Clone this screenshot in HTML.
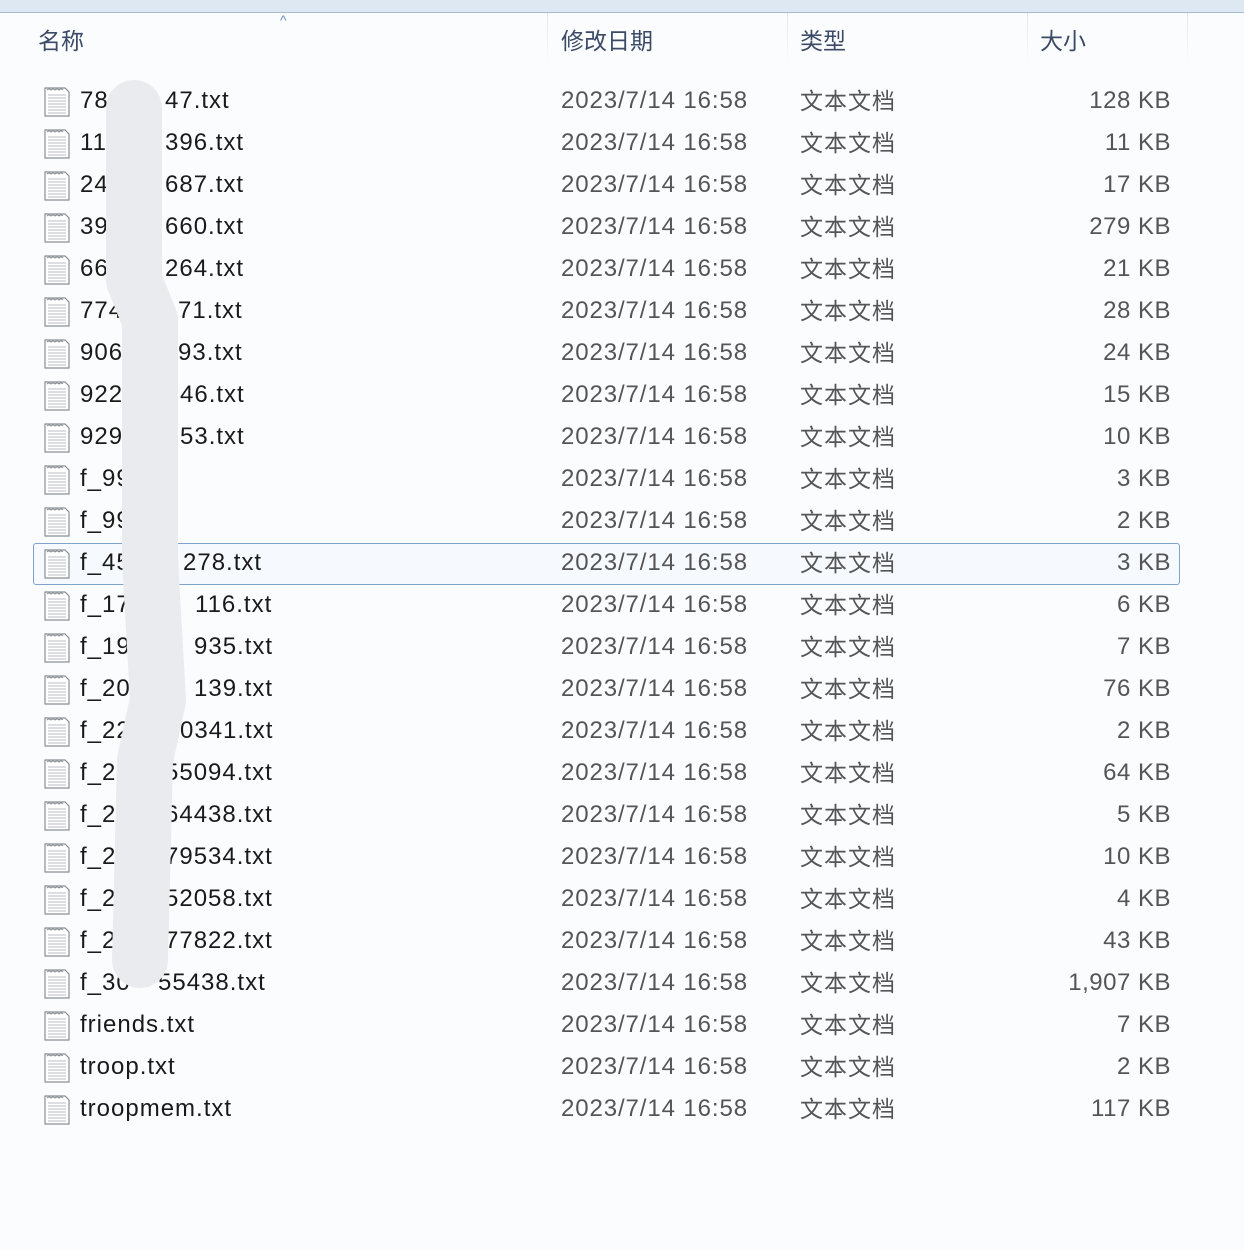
<!DOCTYPE html>
<html><head><meta charset="utf-8"><style>
html,body{margin:0;padding:0}
body{width:1244px;height:1250px;position:relative;background:#fbfcfe;overflow:hidden;font-family:"Liberation Sans","Noto Sans CJK SC",sans-serif}
.top{position:absolute;left:0;top:0;width:1244px;height:12px;background:#dde8f3;border-bottom:1px solid #a9bccf}
.hd{position:absolute;top:13px;height:58px;line-height:56px;font-size:23px;color:#3b4a66}
.div{position:absolute;top:13px;width:1px;height:50px;background:linear-gradient(#e3e6ea,#fbfcfe)}
.row{position:absolute;left:0;width:1244px;height:42px;line-height:42px;font-size:24px}
.ic{position:absolute;left:44px;top:7px}
.n{position:absolute;left:80px;color:#1a1a1a;letter-spacing:1px}
.r{position:absolute;color:#1a1a1a;letter-spacing:1px}
.d{position:absolute;left:561px;color:#555;letter-spacing:0.9px}
.t{position:absolute;left:800px;color:#555;font-size:23px;letter-spacing:1px}
.s{position:absolute;right:73px;color:#555;letter-spacing:0.5px}
.sel{position:absolute;left:33px;top:543px;width:1145px;height:40px;border:1px solid #7fa3cc;border-radius:3px;background:#f6f9fd}
</style></head><body>
<div class="top"></div>
<div class="hd" style="left:38px">名称</div>
<div style="position:absolute;left:280px;top:12px;font-size:14px;color:#6a8fb8">&#94;</div>
<div class="div" style="left:547px"></div>
<div class="hd" style="left:561px">修改日期</div>
<div class="div" style="left:787px"></div>
<div class="hd" style="left:800px">类型</div>
<div class="div" style="left:1027px"></div>
<div class="hd" style="left:1040px">大小</div>
<div class="div" style="left:1187px"></div>
<div class="sel"></div>
<svg width="0" height="0" style="position:absolute"><defs><symbol id="f" viewBox="0 0 26 30"><path d="M1 1H21L25 5V29H1Z" fill="#fff" stroke="#8a8f96" stroke-width="1.2"/><g stroke="#b8bec6" stroke-width="1"><path d="M4 8H22M4 11H22M4 14H22M4 17H22M4 20H22M4 23H22M4 26H22"/></g><path d="M3 3Q5 1 7 3Q9 1 11 3Q13 1 15 3Q17 1 19 3" fill="none" stroke="#8a8f96" stroke-width="1"/></symbol></defs></svg>
<div class="row" style="top:80px"><svg class="ic" width="26" height="30"><use href="#f"/></svg><span class="n">78</span><span class="r" style="left:165px">47.txt</span><span class="d">2023/7/14 16:58</span><span class="t">文本文档</span><span class="s">128 KB</span></div>
<div class="row" style="top:122px"><svg class="ic" width="26" height="30"><use href="#f"/></svg><span class="n">11</span><span class="r" style="left:165px">396.txt</span><span class="d">2023/7/14 16:58</span><span class="t">文本文档</span><span class="s">11 KB</span></div>
<div class="row" style="top:164px"><svg class="ic" width="26" height="30"><use href="#f"/></svg><span class="n">24</span><span class="r" style="left:165px">687.txt</span><span class="d">2023/7/14 16:58</span><span class="t">文本文档</span><span class="s">17 KB</span></div>
<div class="row" style="top:206px"><svg class="ic" width="26" height="30"><use href="#f"/></svg><span class="n">39</span><span class="r" style="left:165px">660.txt</span><span class="d">2023/7/14 16:58</span><span class="t">文本文档</span><span class="s">279 KB</span></div>
<div class="row" style="top:248px"><svg class="ic" width="26" height="30"><use href="#f"/></svg><span class="n">66</span><span class="r" style="left:165px">264.txt</span><span class="d">2023/7/14 16:58</span><span class="t">文本文档</span><span class="s">21 KB</span></div>
<div class="row" style="top:290px"><svg class="ic" width="26" height="30"><use href="#f"/></svg><span class="n">774</span><span class="r" style="left:178px">71.txt</span><span class="d">2023/7/14 16:58</span><span class="t">文本文档</span><span class="s">28 KB</span></div>
<div class="row" style="top:332px"><svg class="ic" width="26" height="30"><use href="#f"/></svg><span class="n">906</span><span class="r" style="left:178px">93.txt</span><span class="d">2023/7/14 16:58</span><span class="t">文本文档</span><span class="s">24 KB</span></div>
<div class="row" style="top:374px"><svg class="ic" width="26" height="30"><use href="#f"/></svg><span class="n">922</span><span class="r" style="left:180px">46.txt</span><span class="d">2023/7/14 16:58</span><span class="t">文本文档</span><span class="s">15 KB</span></div>
<div class="row" style="top:416px"><svg class="ic" width="26" height="30"><use href="#f"/></svg><span class="n">929</span><span class="r" style="left:180px">53.txt</span><span class="d">2023/7/14 16:58</span><span class="t">文本文档</span><span class="s">10 KB</span></div>
<div class="row" style="top:458px"><svg class="ic" width="26" height="30"><use href="#f"/></svg><span class="n">f_99</span><span class="d">2023/7/14 16:58</span><span class="t">文本文档</span><span class="s">3 KB</span></div>
<div class="row" style="top:500px"><svg class="ic" width="26" height="30"><use href="#f"/></svg><span class="n">f_99</span><span class="d">2023/7/14 16:58</span><span class="t">文本文档</span><span class="s">2 KB</span></div>
<div class="row" style="top:542px"><svg class="ic" width="26" height="30"><use href="#f"/></svg><span class="n">f_45</span><span class="r" style="left:183px">278.txt</span><span class="d">2023/7/14 16:58</span><span class="t">文本文档</span><span class="s">3 KB</span></div>
<div class="row" style="top:584px"><svg class="ic" width="26" height="30"><use href="#f"/></svg><span class="n">f_17</span><span class="r" style="left:195px">116.txt</span><span class="d">2023/7/14 16:58</span><span class="t">文本文档</span><span class="s">6 KB</span></div>
<div class="row" style="top:626px"><svg class="ic" width="26" height="30"><use href="#f"/></svg><span class="n">f_19</span><span class="r" style="left:194px">935.txt</span><span class="d">2023/7/14 16:58</span><span class="t">文本文档</span><span class="s">7 KB</span></div>
<div class="row" style="top:668px"><svg class="ic" width="26" height="30"><use href="#f"/></svg><span class="n">f_20</span><span class="r" style="left:194px">139.txt</span><span class="d">2023/7/14 16:58</span><span class="t">文本文档</span><span class="s">76 KB</span></div>
<div class="row" style="top:710px"><svg class="ic" width="26" height="30"><use href="#f"/></svg><span class="n">f_22</span><span class="r" style="left:180px">0341.txt</span><span class="d">2023/7/14 16:58</span><span class="t">文本文档</span><span class="s">2 KB</span></div>
<div class="row" style="top:752px"><svg class="ic" width="26" height="30"><use href="#f"/></svg><span class="n">f_2</span><span class="r" style="left:165px">55094.txt</span><span class="d">2023/7/14 16:58</span><span class="t">文本文档</span><span class="s">64 KB</span></div>
<div class="row" style="top:794px"><svg class="ic" width="26" height="30"><use href="#f"/></svg><span class="n">f_2</span><span class="r" style="left:165px">64438.txt</span><span class="d">2023/7/14 16:58</span><span class="t">文本文档</span><span class="s">5 KB</span></div>
<div class="row" style="top:836px"><svg class="ic" width="26" height="30"><use href="#f"/></svg><span class="n">f_2</span><span class="r" style="left:165px">79534.txt</span><span class="d">2023/7/14 16:58</span><span class="t">文本文档</span><span class="s">10 KB</span></div>
<div class="row" style="top:878px"><svg class="ic" width="26" height="30"><use href="#f"/></svg><span class="n">f_2</span><span class="r" style="left:165px">52058.txt</span><span class="d">2023/7/14 16:58</span><span class="t">文本文档</span><span class="s">4 KB</span></div>
<div class="row" style="top:920px"><svg class="ic" width="26" height="30"><use href="#f"/></svg><span class="n">f_2</span><span class="r" style="left:165px">77822.txt</span><span class="d">2023/7/14 16:58</span><span class="t">文本文档</span><span class="s">43 KB</span></div>
<div class="row" style="top:962px"><svg class="ic" width="26" height="30"><use href="#f"/></svg><span class="n">f_30</span><span class="r" style="left:158px">55438.txt</span><span class="d">2023/7/14 16:58</span><span class="t">文本文档</span><span class="s">1,907 KB</span></div>
<div class="row" style="top:1004px"><svg class="ic" width="26" height="30"><use href="#f"/></svg><span class="n">friends.txt</span><span class="d">2023/7/14 16:58</span><span class="t">文本文档</span><span class="s">7 KB</span></div>
<div class="row" style="top:1046px"><svg class="ic" width="26" height="30"><use href="#f"/></svg><span class="n">troop.txt</span><span class="d">2023/7/14 16:58</span><span class="t">文本文档</span><span class="s">2 KB</span></div>
<div class="row" style="top:1088px"><svg class="ic" width="26" height="30"><use href="#f"/></svg><span class="n">troopmem.txt</span><span class="d">2023/7/14 16:58</span><span class="t">文本文档</span><span class="s">117 KB</span></div>
<svg style="position:absolute;left:0;top:0" width="300" height="1000"><path d="M134 108L134 280L150 320L150 560L158 700L145 760L140 960" fill="none" stroke="#eaebee" stroke-width="56" stroke-linecap="round" stroke-linejoin="round"/></svg>
</body></html>
